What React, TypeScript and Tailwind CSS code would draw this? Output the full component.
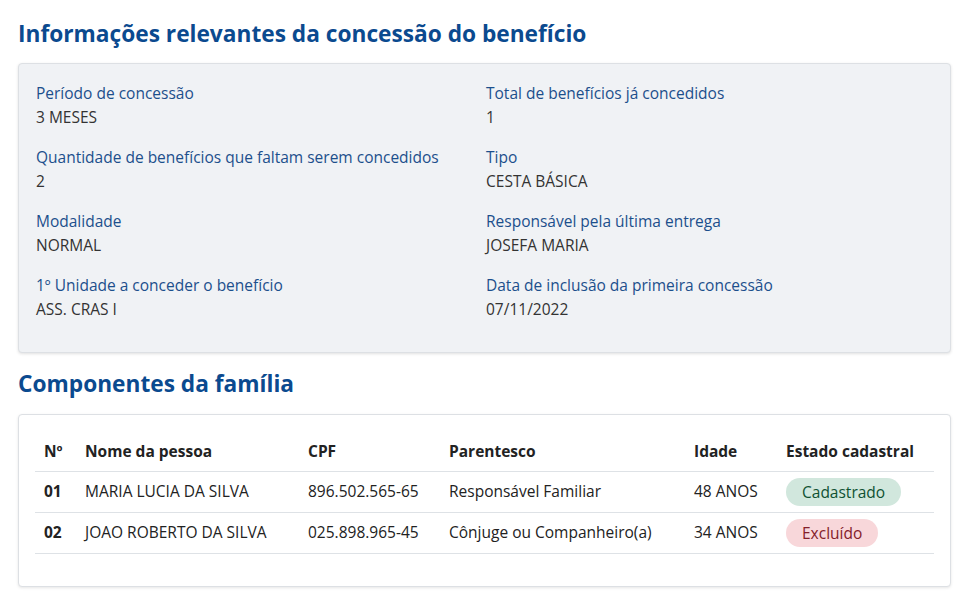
import React from "react";

const info: [string, string][] = [
  ["Período de concessão", "3 MESES"],
  ["Total de benefícios já concedidos", "1"],
  ["Quantidade de benefícios que faltam serem concedidos", "2"],
  ["Tipo", "CESTA BÁSICA"],
  ["Modalidade", "NORMAL"],
  ["Responsável pela última entrega", "JOSEFA MARIA"],
  ["1º Unidade a conceder o benefício", "ASS. CRAS I"],
  ["Data de inclusão da primeira concessão", "07/11/2022"],
];

const rows = [
  { n: "01", nome: "MARIA LUCIA DA SILVA", cpf: "896.502.565-65", par: "Responsável Familiar", idade: "48 ANOS", ok: true },
  { n: "02", nome: "JOAO ROBERTO DA SILVA", cpf: "025.898.965-45", par: "Cônjuge ou Companheiro(a)", idade: "34 ANOS", ok: false },
];

export default function App() {
  return (
    <div
      className="min-h-[599px] bg-white pl-[18px] pr-[18px] pt-[18px] text-[#333]"
      style={{ fontFamily: '"Open Sans", "Noto Sans", sans-serif' }}
    >
      <h1 className="text-[22.7px] font-bold leading-[32px] text-[#0b4a8f]">
        Informações relevantes da concessão do benefício
      </h1>
      <div className="mt-[13px] rounded-[4px] border border-[#dde0e4] bg-[#f0f2f5] px-[17px] pt-[17px] pb-[31px] shadow-[0_1px_3px_rgba(0,0,0,0.12)]">
        <div className="grid grid-cols-[450px_1fr] gap-y-[16px]">
          {info.map(([l, v]) => (
            <div key={l} className="text-[15.5px] leading-[24px]">
              <div className="text-[#1c4f8c]">{l}</div>
              <div className="text-[#333]">{v}</div>
            </div>
          ))}
        </div>
      </div>

      <h2 className="mt-[15px] text-[22.7px] font-bold leading-[32px] text-[#0b4a8f]">
        Componentes da família
      </h2>
      <div className="mt-[14px] rounded-[4px] border border-[#dde0e4] bg-white px-[16px] pt-[16px] pb-[32px] shadow-[0_1px_3px_rgba(0,0,0,0.1)]">
        <table className="w-full border-collapse text-[15.5px] text-[#222]">
          <thead>
            <tr className="border-b border-[#dee2e6] text-[15.5px]">
              <th className="w-[50px] py-[8px] pl-[9px] text-left font-bold leading-[24px]">Nº</th>
              <th className="w-[223px] py-[8px] text-left font-bold leading-[24px]">Nome da pessoa</th>
              <th className="w-[141px] py-[8px] text-left font-bold leading-[24px]">CPF</th>
              <th className="w-[245px] py-[8px] text-left font-bold leading-[24px]">Parentesco</th>
              <th className="w-[92px] py-[8px] text-left font-bold leading-[24px]">Idade</th>
              <th className="py-[8px] text-left font-bold leading-[24px]">Estado cadastral</th>
            </tr>
          </thead>
          <tbody>
            {rows.map((r) => (
              <tr key={r.n} className="border-b border-[#dee2e6]">
                <td className="h-[41px] pl-[9px] font-bold">{r.n}</td>
                <td className="h-[41px]">{r.nome}</td>
                <td className="h-[41px]">{r.cpf}</td>
                <td className="h-[41px]">{r.par}</td>
                <td className="h-[41px]">{r.idade}</td>
                <td className="h-[41px]">
                  {r.ok ? (
                    <span className="inline-block rounded-full bg-[#d1e7dd] px-[16px] leading-[28px] text-[#0f5132]">
                      Cadastrado
                    </span>
                  ) : (
                    <span className="inline-block rounded-full bg-[#f8d7da] px-[16px] leading-[28px] text-[#842029]">
                      Excluído
                    </span>
                  )}
                </td>
              </tr>
            ))}
          </tbody>
        </table>
      </div>
    </div>
  );
}
